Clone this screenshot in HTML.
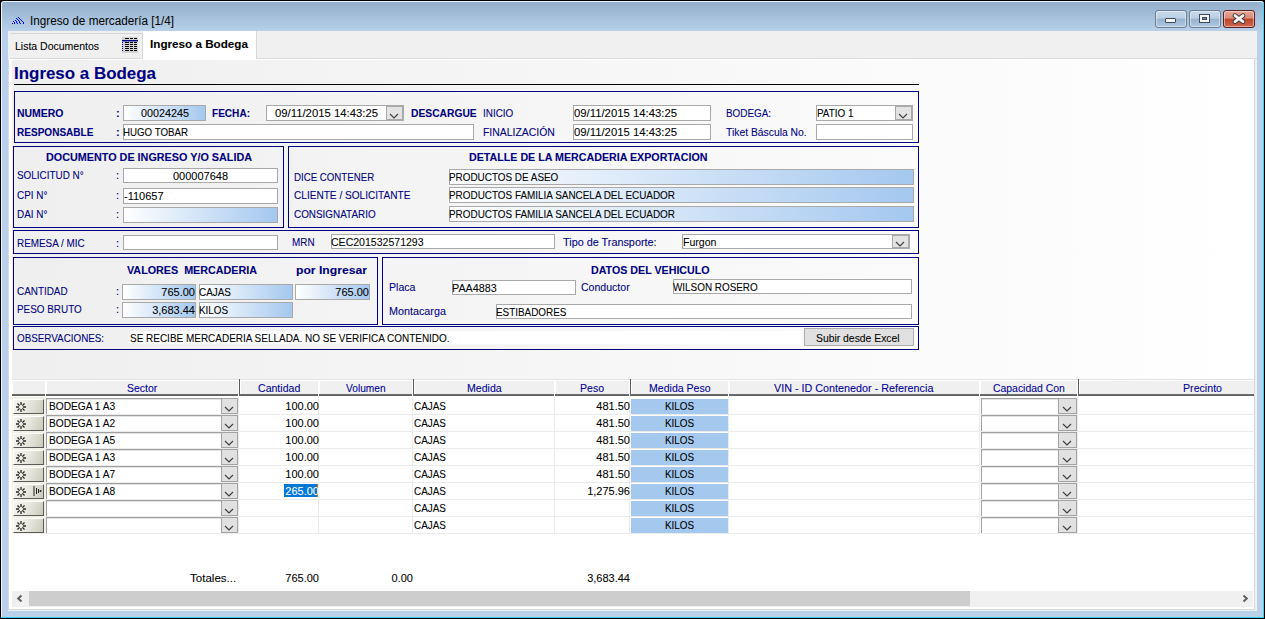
<!DOCTYPE html><html><head><meta charset="utf-8"><style>
html,body{margin:0;padding:0;}
body{width:1265px;height:619px;position:relative;overflow:hidden;background:#000;font-family:"Liberation Sans",sans-serif;font-size:11px;}
.t{position:absolute;white-space:pre;line-height:13px;font-size:11px;color:#000;transform-origin:0 0;-webkit-text-stroke:0.08px currentColor;}
</style></head><body>
<div style="position:absolute;left:0px;top:0px;width:1265px;height:619px;box-sizing:border-box;background:#000;"></div><div style="position:absolute;left:1px;top:1px;width:1263px;height:617px;box-sizing:border-box;background:#eef6fd;border-radius:3px 3px 0 0;"></div><div style="position:absolute;left:2px;top:2px;width:1261px;height:616px;box-sizing:border-box;background:linear-gradient(to bottom,#93afcc 0px,#b9d1ea 30px,#b9d1ea 100%);border-radius:2px 2px 0 0;"></div><div style="position:absolute;left:1263px;top:3px;width:1px;height:615px;box-sizing:border-box;background:#3ad0f0;"></div><div style="position:absolute;left:1px;top:617px;width:1263px;height:1px;box-sizing:border-box;background:#3ad0f0;"></div><svg style="position:absolute;left:11px;top:16px" width="14" height="9" viewBox="0 0 14 9" fill="#0000ff"><rect x="1" y="7" width="1" height="1"/><rect x="2" y="5" width="1" height="1"/><rect x="3" y="6" width="1" height="1"/><rect x="3" y="7" width="1" height="1"/><rect x="4" y="4" width="1" height="1"/><rect x="5" y="5" width="1" height="1"/><rect x="5" y="6" width="1" height="1"/><rect x="6" y="7" width="1" height="1"/><rect x="5" y="2" width="1" height="1"/><rect x="6" y="3" width="1" height="1"/><rect x="7" y="4" width="1" height="1"/><rect x="8" y="5" width="1" height="1"/><rect x="8" y="6" width="1" height="1"/><rect x="9" y="7" width="1" height="1"/><rect x="7" y="1" width="1" height="1"/><rect x="8" y="2" width="1" height="1"/><rect x="9" y="3" width="1" height="1"/><rect x="10" y="4" width="1" height="1"/><rect x="11" y="5" width="1" height="1"/><rect x="12" y="6" width="1" height="1"/><rect x="12" y="7" width="1" height="1"/></svg><div class="t" style="left:30.00px;top:14px;font-size:12px;line-height:14px;transform:scaleX(0.9768);-webkit-text-stroke:0;">Ingreso de mercadería [1/4]</div><div style="position:absolute;left:1155px;top:10px;width:32px;height:18px;box-sizing:border-box;background:linear-gradient(to bottom,#c9daec 0%,#bccfe6 45%,#98b2cf 50%,#b0c8e2 100%);border:1px solid #6b7d90;border-radius:3px;box-shadow:inset 0 0 0 1px rgba(255,255,255,0.45);"></div><div style="position:absolute;left:1189px;top:10px;width:32px;height:18px;box-sizing:border-box;background:linear-gradient(to bottom,#c9daec 0%,#bccfe6 45%,#98b2cf 50%,#b0c8e2 100%);border:1px solid #6b7d90;border-radius:3px;box-shadow:inset 0 0 0 1px rgba(255,255,255,0.45);"></div><div style="position:absolute;left:1223px;top:10px;width:32px;height:18px;box-sizing:border-box;background:linear-gradient(to bottom,#e8a598 0%,#dc8a78 45%,#c0452a 50%,#cf6650 100%);border:1px solid #5a1e1e;border-radius:3px;box-shadow:inset 0 0 0 1px rgba(255,255,255,0.45);"></div><div style="position:absolute;left:1165px;top:18px;width:11px;height:5px;box-sizing:border-box;background:#f4f4f4;border:1px solid #3c4a5a;border-radius:1px;"></div><div style="position:absolute;left:1199px;top:14px;width:11px;height:9px;box-sizing:border-box;border:1px solid #3c4a5a;background:transparent;box-shadow:inset 0 0 0 2px #f4f4f4;"></div><div style="position:absolute;left:1202px;top:17px;width:5px;height:3px;box-sizing:border-box;background:#6f8fb0;border:1px solid #3c4a5a;"></div><svg style="position:absolute;left:1232px;top:13px" width="14" height="11" viewBox="0 0 14 11"><path d="M3 2.6 L11 8.6 M11 2.6 L3 8.6" stroke="#3a3a3a" stroke-width="4.6" stroke-linecap="round"/><path d="M3 2.6 L11 8.6 M11 2.6 L3 8.6" stroke="#f2f2f2" stroke-width="2.8" stroke-linecap="round"/></svg><div style="position:absolute;left:8px;top:31px;width:1249px;height:580px;box-sizing:border-box;background:#f0f0f0;"></div><div style="position:absolute;left:10px;top:33px;width:133px;height:26px;box-sizing:border-box;background:#f0f0f0;border-top:1px solid #d6d6d6;border-right:1px solid #d9d9d9;border-bottom:1px solid #d9d9d9;"></div><div style="position:absolute;left:256px;top:31px;width:1001px;height:28px;box-sizing:border-box;background:#f0f0f0;border-left:1px solid #d9d9d9;border-bottom:1px solid #d9d9d9;"></div><div class="t" style="left:15.00px;top:40px;transform:scaleX(0.9540);">Lista Documentos</div><svg style="position:absolute;left:122px;top:37px" width="16" height="16" viewBox="0 0 16 16"><rect x="0" y="0" width="16" height="16" fill="#d2d2d2"/><rect x="3" y="1" width="4" height="1" fill="#000"/><rect x="8" y="1" width="3" height="1" fill="#000"/><rect x="12" y="1" width="3" height="1" fill="#000"/><rect x="3" y="5" width="4" height="1" fill="#000"/><rect x="8" y="5" width="3" height="1" fill="#000"/><rect x="12" y="5" width="3" height="1" fill="#000"/><rect x="3" y="7" width="4" height="1" fill="#000"/><rect x="8" y="7" width="3" height="1" fill="#000"/><rect x="12" y="7" width="3" height="1" fill="#000"/><rect x="3" y="9" width="4" height="1" fill="#000"/><rect x="8" y="9" width="3" height="1" fill="#000"/><rect x="12" y="9" width="3" height="1" fill="#000"/><rect x="3" y="11" width="4" height="1" fill="#000"/><rect x="8" y="11" width="3" height="1" fill="#000"/><rect x="12" y="11" width="3" height="1" fill="#000"/><rect x="3" y="13" width="4" height="1" fill="#000"/><rect x="8" y="13" width="3" height="1" fill="#000"/><rect x="12" y="13" width="3" height="1" fill="#000"/><rect x="0" y="3" width="16" height="1.4" fill="#000090"/><rect x="0" y="5" width="1" height="1" fill="#000090"/><rect x="0" y="7" width="1" height="1" fill="#000090"/><rect x="0" y="9" width="1" height="1" fill="#000090"/><rect x="0" y="11" width="1" height="1" fill="#000090"/><rect x="0" y="13" width="1" height="1" fill="#000090"/></svg><div style="position:absolute;left:143px;top:31px;width:113px;height:29px;box-sizing:border-box;background:#fff;"></div><div class="t" style="left:150.00px;top:38px;font-weight:bold;transform:scaleX(1.0618);">Ingreso a Bodega</div><div style="position:absolute;left:8px;top:59px;width:1247px;height:551px;box-sizing:border-box;background:#fff;border:1px solid #d9d9d9;border-top-color:#fff;"></div><div style="position:absolute;left:12px;top:60px;width:1242px;height:319px;box-sizing:border-box;background:linear-gradient(to right,#efefef 0%,#ffffff 100%);"></div><div class="t" style="left:14.00px;top:64px;font-size:17px;line-height:20px;font-weight:bold;color:#000080;transform:scaleX(0.9955);">Ingreso a Bodega</div><div style="position:absolute;left:14px;top:84px;width:905px;height:1px;box-sizing:border-box;background:#000;"></div><div style="position:absolute;left:14px;top:91px;width:905px;height:52px;box-sizing:border-box;border:1px solid #000080;"></div><div class="t" style="left:17.00px;top:107px;font-weight:bold;color:#000080;transform:scaleX(0.9511);">NUMERO</div><div class="t" style="left:116.00px;top:107px;font-weight:bold;color:#000080;">:</div><div style="position:absolute;left:123px;top:105px;width:83px;height:16px;box-sizing:border-box;border:1px solid #a9a9a9;background:linear-gradient(to right,#ffffff 0%,#a4c8ef 100%);"></div><div class="t" style="left:140.50px;top:107px;transform:scaleX(0.9805);">00024245</div><div class="t" style="left:212.00px;top:107px;font-weight:bold;color:#000080;transform:scaleX(0.9143);">FECHA:</div><div style="position:absolute;left:266px;top:105px;width:138px;height:16px;box-sizing:border-box;border:1px solid #a9a9a9;background:#fff;"></div><div style="position:absolute;left:386px;top:106px;width:17px;height:14px;box-sizing:border-box;background:#e3e3e3;border:1px solid #a9a9a9;"></div><svg style="position:absolute;left:389.0px;top:112.5px" width="10" height="6" viewBox="0 0 10 6"><path d="M1 1 L5 5 L9 1" fill="none" stroke="#444" stroke-width="1.2"/></svg><div class="t" style="left:275.00px;top:107px;transform:scaleX(1.0287);">09/11/2015 14:43:25</div><div class="t" style="left:411.00px;top:107px;font-weight:bold;color:#000080;transform:scaleX(0.9346);">DESCARGUE</div><div class="t" style="left:483.00px;top:107px;color:#000080;transform:scaleX(0.9000);">INICIO</div><div style="position:absolute;left:573px;top:105px;width:138px;height:16px;box-sizing:border-box;border:1px solid #a9a9a9;background:#fff;"></div><div class="t" style="left:574.00px;top:107px;transform:scaleX(1.0287);">09/11/2015 14:43:25</div><div class="t" style="left:726.00px;top:107px;color:#000080;transform:scaleX(0.9000);">BODEGA:</div><div style="position:absolute;left:816px;top:105px;width:97px;height:16px;box-sizing:border-box;border:1px solid #a9a9a9;background:#fff;"></div><div class="t" style="left:817.00px;top:107px;transform:scaleX(0.9000);">PATIO 1</div><div style="position:absolute;left:895px;top:106px;width:17px;height:14px;box-sizing:border-box;background:#e3e3e3;border:1px solid #a9a9a9;"></div><svg style="position:absolute;left:898.0px;top:112.5px" width="10" height="6" viewBox="0 0 10 6"><path d="M1 1 L5 5 L9 1" fill="none" stroke="#444" stroke-width="1.2"/></svg><div class="t" style="left:17.00px;top:126px;font-weight:bold;color:#000080;transform:scaleX(0.9122);">RESPONSABLE</div><div class="t" style="left:116.00px;top:126px;font-weight:bold;color:#000080;">:</div><div style="position:absolute;left:123px;top:124px;width:351px;height:16px;box-sizing:border-box;border:1px solid #a9a9a9;background:#fff;"></div><div class="t" style="left:123.00px;top:126px;transform:scaleX(0.8836);">HUGO TOBAR</div><div class="t" style="left:483.00px;top:126px;color:#000080;transform:scaleX(0.9473);">FINALIZACIÓN</div><div style="position:absolute;left:573px;top:124px;width:138px;height:16px;box-sizing:border-box;border:1px solid #a9a9a9;background:#fff;"></div><div class="t" style="left:574.00px;top:126px;transform:scaleX(1.0287);">09/11/2015 14:43:25</div><div class="t" style="left:726.00px;top:126px;color:#000080;transform:scaleX(0.9406);">Tiket Báscula No.</div><div style="position:absolute;left:816px;top:124px;width:97px;height:16px;box-sizing:border-box;border:1px solid #a9a9a9;background:#fff;"></div><div style="position:absolute;left:13px;top:146px;width:271px;height:82px;box-sizing:border-box;border:1px solid #000080;"></div><div class="t" style="left:45.50px;top:151px;font-weight:bold;color:#000080;transform:scaleX(0.9817);">DOCUMENTO DE INGRESO Y/O SALIDA</div><div class="t" style="left:17.00px;top:169px;color:#000080;transform:scaleX(0.9000);">SOLICITUD N°</div><div class="t" style="left:116.00px;top:169px;color:#000080;">:</div><div style="position:absolute;left:123px;top:168px;width:155px;height:15px;box-sizing:border-box;border:1px solid #a9a9a9;background:#fff;"></div><div class="t" style="left:172.97px;top:170px;">000007648</div><div class="t" style="left:17.00px;top:189px;color:#000080;transform:scaleX(0.9000);">CPI N°</div><div class="t" style="left:116.00px;top:189px;color:#000080;">:</div><div style="position:absolute;left:123px;top:188px;width:155px;height:16px;box-sizing:border-box;border:1px solid #a9a9a9;background:#fff;"></div><div class="t" style="left:124.00px;top:190px;">-110657</div><div class="t" style="left:17.00px;top:208px;color:#000080;transform:scaleX(0.9000);">DAI N°</div><div class="t" style="left:116.00px;top:208px;color:#000080;">:</div><div style="position:absolute;left:123px;top:207px;width:155px;height:16px;box-sizing:border-box;border:1px solid #a9a9a9;background:linear-gradient(to right,#ffffff 0%,#a4c8ef 100%);"></div><div style="position:absolute;left:288px;top:146px;width:631px;height:82px;box-sizing:border-box;border:1px solid #000080;"></div><div class="t" style="left:468.50px;top:151px;font-weight:bold;color:#000080;transform:scaleX(0.9708);">DETALLE DE LA MERCADERIA EXPORTACION</div><div class="t" style="left:294.00px;top:171px;color:#000080;transform:scaleX(0.8807);">DICE CONTENER</div><div style="position:absolute;left:449px;top:169px;width:465px;height:16px;box-sizing:border-box;border:1px solid #a9a9a9;background:linear-gradient(to right,#ffffff 0%,#a4c8ef 100%);"></div><div class="t" style="left:449.00px;top:171px;transform:scaleX(0.9000);">PRODUCTOS DE ASEO</div><div class="t" style="left:294.00px;top:189px;color:#000080;transform:scaleX(0.9170);">CLIENTE / SOLICITANTE</div><div style="position:absolute;left:449px;top:187px;width:465px;height:16px;box-sizing:border-box;border:1px solid #a9a9a9;background:linear-gradient(to right,#ffffff 0%,#a4c8ef 100%);"></div><div class="t" style="left:449.00px;top:189px;transform:scaleX(0.9017);">PRODUCTOS FAMILIA SANCELA DEL ECUADOR</div><div class="t" style="left:294.00px;top:208px;color:#000080;transform:scaleX(0.9000);">CONSIGNATARIO</div><div style="position:absolute;left:449px;top:206px;width:465px;height:16px;box-sizing:border-box;border:1px solid #a9a9a9;background:linear-gradient(to right,#ffffff 0%,#a4c8ef 100%);"></div><div class="t" style="left:449.00px;top:208px;transform:scaleX(0.9017);">PRODUCTOS FAMILIA SANCELA DEL ECUADOR</div><div style="position:absolute;left:13px;top:230px;width:906px;height:24px;box-sizing:border-box;border:1px solid #000080;"></div><div class="t" style="left:17.00px;top:237px;color:#000080;transform:scaleX(0.9000);">REMESA / MIC</div><div class="t" style="left:116.00px;top:237px;color:#000080;">:</div><div style="position:absolute;left:123px;top:235px;width:155px;height:15px;box-sizing:border-box;border:1px solid #a9a9a9;background:#fff;"></div><div class="t" style="left:292.00px;top:236px;color:#000080;transform:scaleX(0.9000);">MRN</div><div style="position:absolute;left:331px;top:234px;width:224px;height:15px;box-sizing:border-box;border:1px solid #a9a9a9;background:#fff;"></div><div class="t" style="left:331.00px;top:236px;transform:scaleX(0.9582);">CEC201532571293</div><div class="t" style="left:563.00px;top:236px;color:#000080;transform:scaleX(0.9854);">Tipo de Transporte:</div><div style="position:absolute;left:682px;top:234px;width:228px;height:15px;box-sizing:border-box;border:1px solid #a9a9a9;background:#fff;"></div><div class="t" style="left:683.00px;top:236px;transform:scaleX(0.9600);">Furgon</div><div style="position:absolute;left:892px;top:235px;width:17px;height:13px;box-sizing:border-box;background:#e3e3e3;border:1px solid #a9a9a9;"></div><svg style="position:absolute;left:895.0px;top:241.0px" width="10" height="6" viewBox="0 0 10 6"><path d="M1 1 L5 5 L9 1" fill="none" stroke="#444" stroke-width="1.2"/></svg><div style="position:absolute;left:13px;top:257px;width:365px;height:68px;box-sizing:border-box;border:1px solid #000080;"></div><div class="t" style="left:127.00px;top:264px;font-weight:bold;color:#000080;transform:scaleX(0.9772);">VALORES  MERCADERIA</div><div class="t" style="left:296.00px;top:264px;font-weight:bold;color:#000080;transform:scaleX(1.1061);">por Ingresar</div><div class="t" style="left:17.00px;top:285px;color:#000080;transform:scaleX(0.9000);">CANTIDAD</div><div class="t" style="left:116.00px;top:285px;color:#000080;">:</div><div style="position:absolute;left:122px;top:284px;width:74px;height:16px;box-sizing:border-box;border:1px solid #a9a9a9;background:linear-gradient(to right,#ffffff 0%,#a4c8ef 100%);"></div><div class="t" style="left:161.34px;top:286px;">765.00</div><div style="position:absolute;left:199px;top:284px;width:94px;height:16px;box-sizing:border-box;border:1px solid #a9a9a9;background:linear-gradient(to right,#ffffff 0%,#a4c8ef 100%);"></div><div class="t" style="left:199.00px;top:286px;transform:scaleX(0.9000);">CAJAS</div><div style="position:absolute;left:295px;top:284px;width:75px;height:16px;box-sizing:border-box;border:1px solid #a9a9a9;background:linear-gradient(to right,#ffffff 0%,#a4c8ef 100%);"></div><div class="t" style="left:335.34px;top:286px;">765.00</div><div class="t" style="left:17.00px;top:303px;color:#000080;transform:scaleX(0.9000);">PESO BRUTO</div><div class="t" style="left:116.00px;top:303px;color:#000080;">:</div><div style="position:absolute;left:122px;top:302px;width:74px;height:16px;box-sizing:border-box;border:1px solid #a9a9a9;background:linear-gradient(to right,#ffffff 0%,#a4c8ef 100%);"></div><div class="t" style="left:152.17px;top:304px;">3,683.44</div><div style="position:absolute;left:199px;top:302px;width:94px;height:16px;box-sizing:border-box;border:1px solid #a9a9a9;background:linear-gradient(to right,#ffffff 0%,#a4c8ef 100%);"></div><div class="t" style="left:199.00px;top:304px;transform:scaleX(0.9000);">KILOS</div><div style="position:absolute;left:382px;top:257px;width:537px;height:68px;box-sizing:border-box;border:1px solid #000080;"></div><div class="t" style="left:591.20px;top:264px;font-weight:bold;color:#000080;transform:scaleX(0.9701);">DATOS DEL VEHICULO</div><div class="t" style="left:389.00px;top:281px;color:#000080;transform:scaleX(0.9600);">Placa</div><div style="position:absolute;left:452px;top:280px;width:124px;height:15px;box-sizing:border-box;border:1px solid #a9a9a9;background:#fff;"></div><div class="t" style="left:452.00px;top:282px;transform:scaleX(0.9787);">PAA4883</div><div class="t" style="left:581.00px;top:281px;color:#000080;transform:scaleX(0.9593);">Conductor</div><div style="position:absolute;left:673px;top:279px;width:239px;height:15px;box-sizing:border-box;border:1px solid #a9a9a9;background:#fff;"></div><div class="t" style="left:673.00px;top:281px;transform:scaleX(0.9000);">WILSON ROSERO</div><div class="t" style="left:389.00px;top:305px;color:#000080;transform:scaleX(0.9795);">Montacarga</div><div style="position:absolute;left:496px;top:304px;width:416px;height:15px;box-sizing:border-box;border:1px solid #a9a9a9;background:#fff;"></div><div class="t" style="left:496.00px;top:306px;transform:scaleX(0.9000);">ESTIBADORES</div><div style="position:absolute;left:13px;top:326px;width:906px;height:24px;box-sizing:border-box;border:1px solid #000080;"></div><div class="t" style="left:17.00px;top:332px;color:#000080;transform:scaleX(0.8942);">OBSERVACIONES:</div><div style="position:absolute;left:130px;top:331px;width:671px;height:13px;box-sizing:border-box;background:#fff;"></div><div class="t" style="left:130.00px;top:332px;transform:scaleX(0.9061);">SE RECIBE MERCADERIA SELLADA. NO SE VERIFICA CONTENIDO.</div><div style="position:absolute;left:804px;top:328px;width:110px;height:18px;box-sizing:border-box;background:#e1e1e1;border:1px solid #adadad;"></div><div class="t" style="left:816.40px;top:332px;transform:scaleX(0.9428);">Subir desde Excel</div><div style="position:absolute;left:12px;top:379px;width:1242px;height:1px;box-sizing:border-box;background:#e3e3e3;"></div><div style="position:absolute;left:12px;top:380px;width:1242px;height:16px;box-sizing:border-box;background:#fff;"></div><div style="position:absolute;left:12px;top:380px;width:33px;height:14px;box-sizing:border-box;background:#f0f0f0;border-top:1px solid #fff;border-left:1px solid #fff;"></div><div style="position:absolute;left:12px;top:394px;width:33px;height:2px;box-sizing:border-box;background:linear-gradient(#707070,#5c5c5c);"></div><div style="position:absolute;left:46px;top:380px;width:192px;height:14px;box-sizing:border-box;background:#f0f0f0;border-top:1px solid #fff;border-left:1px solid #fff;"></div><div style="position:absolute;left:46px;top:394px;width:192px;height:2px;box-sizing:border-box;background:linear-gradient(#707070,#5c5c5c);"></div><div class="t" style="left:126.90px;top:382px;color:#000096;transform:scaleX(0.9498);">Sector</div><div style="position:absolute;left:239px;top:380px;width:79px;height:14px;box-sizing:border-box;background:#f0f0f0;border-top:1px solid #fff;border-left:1px solid #5a5a5a;"></div><div style="position:absolute;left:240px;top:381px;width:1px;height:13px;box-sizing:border-box;background:#fff;"></div><div style="position:absolute;left:239px;top:379px;width:1px;height:15px;box-sizing:border-box;background:#5a5a5a;"></div><div style="position:absolute;left:239px;top:394px;width:79px;height:2px;box-sizing:border-box;background:linear-gradient(#707070,#5c5c5c);"></div><div class="t" style="left:257.86px;top:382px;color:#000096;transform:scaleX(0.9600);">Cantidad</div><div style="position:absolute;left:319px;top:380px;width:93px;height:14px;box-sizing:border-box;background:#f0f0f0;border-top:1px solid #fff;border-left:1px solid #fff;"></div><div style="position:absolute;left:319px;top:394px;width:93px;height:2px;box-sizing:border-box;background:linear-gradient(#707070,#5c5c5c);"></div><div class="t" style="left:345.70px;top:382px;color:#000096;transform:scaleX(0.9250);">Volumen</div><div style="position:absolute;left:413px;top:380px;width:141px;height:14px;box-sizing:border-box;background:#f0f0f0;border-top:1px solid #fff;border-left:1px solid #5a5a5a;"></div><div style="position:absolute;left:414px;top:381px;width:1px;height:13px;box-sizing:border-box;background:#fff;"></div><div style="position:absolute;left:413px;top:379px;width:1px;height:15px;box-sizing:border-box;background:#5a5a5a;"></div><div style="position:absolute;left:413px;top:394px;width:141px;height:2px;box-sizing:border-box;background:linear-gradient(#707070,#5c5c5c);"></div><div class="t" style="left:466.68px;top:382px;color:#000096;transform:scaleX(0.9600);">Medida</div><div style="position:absolute;left:555px;top:380px;width:74px;height:14px;box-sizing:border-box;background:#f0f0f0;border-top:1px solid #fff;border-left:1px solid #fff;"></div><div style="position:absolute;left:555px;top:394px;width:74px;height:2px;box-sizing:border-box;background:linear-gradient(#707070,#5c5c5c);"></div><div class="t" style="left:579.96px;top:382px;color:#000096;transform:scaleX(0.9600);">Peso</div><div style="position:absolute;left:630px;top:380px;width:98px;height:14px;box-sizing:border-box;background:#f0f0f0;border-top:1px solid #fff;border-left:1px solid #5a5a5a;"></div><div style="position:absolute;left:631px;top:381px;width:1px;height:13px;box-sizing:border-box;background:#fff;"></div><div style="position:absolute;left:630px;top:379px;width:1px;height:15px;box-sizing:border-box;background:#5a5a5a;"></div><div style="position:absolute;left:630px;top:394px;width:98px;height:2px;box-sizing:border-box;background:linear-gradient(#707070,#5c5c5c);"></div><div class="t" style="left:648.67px;top:382px;color:#000096;transform:scaleX(0.9600);">Medida Peso</div><div style="position:absolute;left:729px;top:380px;width:250px;height:14px;box-sizing:border-box;background:#f0f0f0;border-top:1px solid #fff;border-left:1px solid #fff;"></div><div style="position:absolute;left:729px;top:394px;width:250px;height:2px;box-sizing:border-box;background:linear-gradient(#707070,#5c5c5c);"></div><div class="t" style="left:774.30px;top:382px;color:#000096;transform:scaleX(0.9801);">VIN - ID Contenedor - Referencia</div><div style="position:absolute;left:980px;top:380px;width:97px;height:14px;box-sizing:border-box;background:#f0f0f0;border-top:1px solid #fff;border-left:1px solid #fff;"></div><div style="position:absolute;left:980px;top:394px;width:97px;height:2px;box-sizing:border-box;background:linear-gradient(#707070,#5c5c5c);"></div><div class="t" style="left:992.60px;top:382px;color:#000096;transform:scaleX(0.9467);">Capacidad Con</div><div style="position:absolute;left:1078px;top:380px;width:176px;height:14px;box-sizing:border-box;background:#f0f0f0;border-top:1px solid #fff;border-left:1px solid #5a5a5a;"></div><div style="position:absolute;left:1079px;top:381px;width:1px;height:13px;box-sizing:border-box;background:#fff;"></div><div style="position:absolute;left:1078px;top:379px;width:1px;height:15px;box-sizing:border-box;background:#5a5a5a;"></div><div style="position:absolute;left:1078px;top:394px;width:176px;height:2px;box-sizing:border-box;background:linear-gradient(#707070,#5c5c5c);"></div><div class="t" style="left:1183.00px;top:382px;color:#000096;transform:scaleX(0.9663);">Precinto</div><div style="position:absolute;left:46px;top:414px;width:1208px;height:1px;box-sizing:border-box;background:#ebebeb;"></div><div style="position:absolute;left:12px;top:397px;width:34px;height:18px;box-sizing:border-box;background:#f1f1e6;"></div><div style="position:absolute;left:13px;top:399px;width:31px;height:15px;box-sizing:border-box;background:linear-gradient(110deg,#f4f4ec 0%,#e9e9df 45%,#dcdcd0 70%,#c9c9bc 100%);border-right:1px solid #5a5a5a;border-bottom:1px solid #5a5a5a;border-top:1px solid #fff;border-left:1px solid #fff;"></div><svg style="position:absolute;left:15.5px;top:401.5px" width="10" height="10" viewBox="0 0 10 10"><g stroke="#262626" stroke-width="1.3"><path d="M6.90 5.00 L10.00 5.00 M6.34 6.34 L8.54 8.54 M5.00 6.90 L5.00 10.00 M3.66 6.34 L1.46 8.54 M3.10 5.00 L0.00 5.00 M3.66 3.66 L1.46 1.46 M5.00 3.10 L5.00 0.00 M6.34 3.66 L8.54 1.46"/></g></svg><div style="position:absolute;left:238px;top:397px;width:1px;height:18px;box-sizing:border-box;background:#ebebeb;"></div><div style="position:absolute;left:318px;top:397px;width:1px;height:18px;box-sizing:border-box;background:#ebebeb;"></div><div style="position:absolute;left:412px;top:397px;width:1px;height:18px;box-sizing:border-box;background:#ebebeb;"></div><div style="position:absolute;left:554px;top:397px;width:1px;height:18px;box-sizing:border-box;background:#ebebeb;"></div><div style="position:absolute;left:629px;top:397px;width:1px;height:18px;box-sizing:border-box;background:#ebebeb;"></div><div style="position:absolute;left:728px;top:397px;width:1px;height:18px;box-sizing:border-box;background:#ebebeb;"></div><div style="position:absolute;left:979px;top:397px;width:1px;height:18px;box-sizing:border-box;background:#ebebeb;"></div><div style="position:absolute;left:1077px;top:397px;width:1px;height:18px;box-sizing:border-box;background:#ebebeb;"></div><div style="position:absolute;left:46px;top:398px;width:192px;height:16px;box-sizing:border-box;background:#fff;border-top:1px solid #a0a0a0;border-left:1px solid #a0a0a0;box-shadow:inset 0 1px 0 #e3e3e3;"></div><div style="position:absolute;left:221px;top:398px;width:17px;height:16px;box-sizing:border-box;background:#e1e1e1;border:1px solid #a3a3a3;"></div><svg style="position:absolute;left:224px;top:406px" width="10" height="6" viewBox="0 0 10 6"><path d="M1 1 L5 5 L9 1" fill="none" stroke="#404040" stroke-width="1.2"/></svg><div class="t" style="left:49.00px;top:400px;transform:scaleX(0.9253);">BODEGA 1 A3</div><div class="t" style="left:285.34px;top:400px;">100.00</div><div class="t" style="left:414.00px;top:400px;transform:scaleX(0.9000);">CAJAS</div><div class="t" style="left:596.34px;top:400px;">481.50</div><div style="position:absolute;left:631px;top:399px;width:97px;height:15px;box-sizing:border-box;background:#a4c8ee;"></div><div class="t" style="left:664.92px;top:400px;transform:scaleX(0.9000);">KILOS</div><div style="position:absolute;left:981px;top:398px;width:96px;height:16px;box-sizing:border-box;background:#fff;border-top:1px solid #a0a0a0;border-left:1px solid #a0a0a0;box-shadow:inset 0 1px 0 #e3e3e3;"></div><div style="position:absolute;left:1058px;top:398px;width:19px;height:16px;box-sizing:border-box;background:#e1e1e1;border:1px solid #a3a3a3;"></div><svg style="position:absolute;left:1062px;top:406px" width="10" height="6" viewBox="0 0 10 6"><path d="M1 1 L5 5 L9 1" fill="none" stroke="#404040" stroke-width="1.2"/></svg><div style="position:absolute;left:46px;top:431px;width:1208px;height:1px;box-sizing:border-box;background:#ebebeb;"></div><div style="position:absolute;left:12px;top:414px;width:34px;height:18px;box-sizing:border-box;background:#f1f1e6;"></div><div style="position:absolute;left:13px;top:416px;width:31px;height:15px;box-sizing:border-box;background:linear-gradient(110deg,#f4f4ec 0%,#e9e9df 45%,#dcdcd0 70%,#c9c9bc 100%);border-right:1px solid #5a5a5a;border-bottom:1px solid #5a5a5a;border-top:1px solid #fff;border-left:1px solid #fff;"></div><svg style="position:absolute;left:15.5px;top:418.5px" width="10" height="10" viewBox="0 0 10 10"><g stroke="#262626" stroke-width="1.3"><path d="M6.90 5.00 L10.00 5.00 M6.34 6.34 L8.54 8.54 M5.00 6.90 L5.00 10.00 M3.66 6.34 L1.46 8.54 M3.10 5.00 L0.00 5.00 M3.66 3.66 L1.46 1.46 M5.00 3.10 L5.00 0.00 M6.34 3.66 L8.54 1.46"/></g></svg><div style="position:absolute;left:238px;top:414px;width:1px;height:18px;box-sizing:border-box;background:#ebebeb;"></div><div style="position:absolute;left:318px;top:414px;width:1px;height:18px;box-sizing:border-box;background:#ebebeb;"></div><div style="position:absolute;left:412px;top:414px;width:1px;height:18px;box-sizing:border-box;background:#ebebeb;"></div><div style="position:absolute;left:554px;top:414px;width:1px;height:18px;box-sizing:border-box;background:#ebebeb;"></div><div style="position:absolute;left:629px;top:414px;width:1px;height:18px;box-sizing:border-box;background:#ebebeb;"></div><div style="position:absolute;left:728px;top:414px;width:1px;height:18px;box-sizing:border-box;background:#ebebeb;"></div><div style="position:absolute;left:979px;top:414px;width:1px;height:18px;box-sizing:border-box;background:#ebebeb;"></div><div style="position:absolute;left:1077px;top:414px;width:1px;height:18px;box-sizing:border-box;background:#ebebeb;"></div><div style="position:absolute;left:46px;top:415px;width:192px;height:16px;box-sizing:border-box;background:#fff;border-top:1px solid #a0a0a0;border-left:1px solid #a0a0a0;box-shadow:inset 0 1px 0 #e3e3e3;"></div><div style="position:absolute;left:221px;top:415px;width:17px;height:16px;box-sizing:border-box;background:#e1e1e1;border:1px solid #a3a3a3;"></div><svg style="position:absolute;left:224px;top:423px" width="10" height="6" viewBox="0 0 10 6"><path d="M1 1 L5 5 L9 1" fill="none" stroke="#404040" stroke-width="1.2"/></svg><div class="t" style="left:49.00px;top:417px;transform:scaleX(0.9253);">BODEGA 1 A2</div><div class="t" style="left:285.34px;top:417px;">100.00</div><div class="t" style="left:414.00px;top:417px;transform:scaleX(0.9000);">CAJAS</div><div class="t" style="left:596.34px;top:417px;">481.50</div><div style="position:absolute;left:631px;top:416px;width:97px;height:15px;box-sizing:border-box;background:#a4c8ee;"></div><div class="t" style="left:664.92px;top:417px;transform:scaleX(0.9000);">KILOS</div><div style="position:absolute;left:981px;top:415px;width:96px;height:16px;box-sizing:border-box;background:#fff;border-top:1px solid #a0a0a0;border-left:1px solid #a0a0a0;box-shadow:inset 0 1px 0 #e3e3e3;"></div><div style="position:absolute;left:1058px;top:415px;width:19px;height:16px;box-sizing:border-box;background:#e1e1e1;border:1px solid #a3a3a3;"></div><svg style="position:absolute;left:1062px;top:423px" width="10" height="6" viewBox="0 0 10 6"><path d="M1 1 L5 5 L9 1" fill="none" stroke="#404040" stroke-width="1.2"/></svg><div style="position:absolute;left:46px;top:448px;width:1208px;height:1px;box-sizing:border-box;background:#ebebeb;"></div><div style="position:absolute;left:12px;top:431px;width:34px;height:18px;box-sizing:border-box;background:#f1f1e6;"></div><div style="position:absolute;left:13px;top:433px;width:31px;height:15px;box-sizing:border-box;background:linear-gradient(110deg,#f4f4ec 0%,#e9e9df 45%,#dcdcd0 70%,#c9c9bc 100%);border-right:1px solid #5a5a5a;border-bottom:1px solid #5a5a5a;border-top:1px solid #fff;border-left:1px solid #fff;"></div><svg style="position:absolute;left:15.5px;top:435.5px" width="10" height="10" viewBox="0 0 10 10"><g stroke="#262626" stroke-width="1.3"><path d="M6.90 5.00 L10.00 5.00 M6.34 6.34 L8.54 8.54 M5.00 6.90 L5.00 10.00 M3.66 6.34 L1.46 8.54 M3.10 5.00 L0.00 5.00 M3.66 3.66 L1.46 1.46 M5.00 3.10 L5.00 0.00 M6.34 3.66 L8.54 1.46"/></g></svg><div style="position:absolute;left:238px;top:431px;width:1px;height:18px;box-sizing:border-box;background:#ebebeb;"></div><div style="position:absolute;left:318px;top:431px;width:1px;height:18px;box-sizing:border-box;background:#ebebeb;"></div><div style="position:absolute;left:412px;top:431px;width:1px;height:18px;box-sizing:border-box;background:#ebebeb;"></div><div style="position:absolute;left:554px;top:431px;width:1px;height:18px;box-sizing:border-box;background:#ebebeb;"></div><div style="position:absolute;left:629px;top:431px;width:1px;height:18px;box-sizing:border-box;background:#ebebeb;"></div><div style="position:absolute;left:728px;top:431px;width:1px;height:18px;box-sizing:border-box;background:#ebebeb;"></div><div style="position:absolute;left:979px;top:431px;width:1px;height:18px;box-sizing:border-box;background:#ebebeb;"></div><div style="position:absolute;left:1077px;top:431px;width:1px;height:18px;box-sizing:border-box;background:#ebebeb;"></div><div style="position:absolute;left:46px;top:432px;width:192px;height:16px;box-sizing:border-box;background:#fff;border-top:1px solid #a0a0a0;border-left:1px solid #a0a0a0;box-shadow:inset 0 1px 0 #e3e3e3;"></div><div style="position:absolute;left:221px;top:432px;width:17px;height:16px;box-sizing:border-box;background:#e1e1e1;border:1px solid #a3a3a3;"></div><svg style="position:absolute;left:224px;top:440px" width="10" height="6" viewBox="0 0 10 6"><path d="M1 1 L5 5 L9 1" fill="none" stroke="#404040" stroke-width="1.2"/></svg><div class="t" style="left:49.00px;top:434px;transform:scaleX(0.9253);">BODEGA 1 A5</div><div class="t" style="left:285.34px;top:434px;">100.00</div><div class="t" style="left:414.00px;top:434px;transform:scaleX(0.9000);">CAJAS</div><div class="t" style="left:596.34px;top:434px;">481.50</div><div style="position:absolute;left:631px;top:433px;width:97px;height:15px;box-sizing:border-box;background:#a4c8ee;"></div><div class="t" style="left:664.92px;top:434px;transform:scaleX(0.9000);">KILOS</div><div style="position:absolute;left:981px;top:432px;width:96px;height:16px;box-sizing:border-box;background:#fff;border-top:1px solid #a0a0a0;border-left:1px solid #a0a0a0;box-shadow:inset 0 1px 0 #e3e3e3;"></div><div style="position:absolute;left:1058px;top:432px;width:19px;height:16px;box-sizing:border-box;background:#e1e1e1;border:1px solid #a3a3a3;"></div><svg style="position:absolute;left:1062px;top:440px" width="10" height="6" viewBox="0 0 10 6"><path d="M1 1 L5 5 L9 1" fill="none" stroke="#404040" stroke-width="1.2"/></svg><div style="position:absolute;left:46px;top:465px;width:1208px;height:1px;box-sizing:border-box;background:#ebebeb;"></div><div style="position:absolute;left:12px;top:448px;width:34px;height:18px;box-sizing:border-box;background:#f1f1e6;"></div><div style="position:absolute;left:13px;top:450px;width:31px;height:15px;box-sizing:border-box;background:linear-gradient(110deg,#f4f4ec 0%,#e9e9df 45%,#dcdcd0 70%,#c9c9bc 100%);border-right:1px solid #5a5a5a;border-bottom:1px solid #5a5a5a;border-top:1px solid #fff;border-left:1px solid #fff;"></div><svg style="position:absolute;left:15.5px;top:452.5px" width="10" height="10" viewBox="0 0 10 10"><g stroke="#262626" stroke-width="1.3"><path d="M6.90 5.00 L10.00 5.00 M6.34 6.34 L8.54 8.54 M5.00 6.90 L5.00 10.00 M3.66 6.34 L1.46 8.54 M3.10 5.00 L0.00 5.00 M3.66 3.66 L1.46 1.46 M5.00 3.10 L5.00 0.00 M6.34 3.66 L8.54 1.46"/></g></svg><div style="position:absolute;left:238px;top:448px;width:1px;height:18px;box-sizing:border-box;background:#ebebeb;"></div><div style="position:absolute;left:318px;top:448px;width:1px;height:18px;box-sizing:border-box;background:#ebebeb;"></div><div style="position:absolute;left:412px;top:448px;width:1px;height:18px;box-sizing:border-box;background:#ebebeb;"></div><div style="position:absolute;left:554px;top:448px;width:1px;height:18px;box-sizing:border-box;background:#ebebeb;"></div><div style="position:absolute;left:629px;top:448px;width:1px;height:18px;box-sizing:border-box;background:#ebebeb;"></div><div style="position:absolute;left:728px;top:448px;width:1px;height:18px;box-sizing:border-box;background:#ebebeb;"></div><div style="position:absolute;left:979px;top:448px;width:1px;height:18px;box-sizing:border-box;background:#ebebeb;"></div><div style="position:absolute;left:1077px;top:448px;width:1px;height:18px;box-sizing:border-box;background:#ebebeb;"></div><div style="position:absolute;left:46px;top:449px;width:192px;height:16px;box-sizing:border-box;background:#fff;border-top:1px solid #a0a0a0;border-left:1px solid #a0a0a0;box-shadow:inset 0 1px 0 #e3e3e3;"></div><div style="position:absolute;left:221px;top:449px;width:17px;height:16px;box-sizing:border-box;background:#e1e1e1;border:1px solid #a3a3a3;"></div><svg style="position:absolute;left:224px;top:457px" width="10" height="6" viewBox="0 0 10 6"><path d="M1 1 L5 5 L9 1" fill="none" stroke="#404040" stroke-width="1.2"/></svg><div class="t" style="left:49.00px;top:451px;transform:scaleX(0.9253);">BODEGA 1 A3</div><div class="t" style="left:285.34px;top:451px;">100.00</div><div class="t" style="left:414.00px;top:451px;transform:scaleX(0.9000);">CAJAS</div><div class="t" style="left:596.34px;top:451px;">481.50</div><div style="position:absolute;left:631px;top:450px;width:97px;height:15px;box-sizing:border-box;background:#a4c8ee;"></div><div class="t" style="left:664.92px;top:451px;transform:scaleX(0.9000);">KILOS</div><div style="position:absolute;left:981px;top:449px;width:96px;height:16px;box-sizing:border-box;background:#fff;border-top:1px solid #a0a0a0;border-left:1px solid #a0a0a0;box-shadow:inset 0 1px 0 #e3e3e3;"></div><div style="position:absolute;left:1058px;top:449px;width:19px;height:16px;box-sizing:border-box;background:#e1e1e1;border:1px solid #a3a3a3;"></div><svg style="position:absolute;left:1062px;top:457px" width="10" height="6" viewBox="0 0 10 6"><path d="M1 1 L5 5 L9 1" fill="none" stroke="#404040" stroke-width="1.2"/></svg><div style="position:absolute;left:46px;top:482px;width:1208px;height:1px;box-sizing:border-box;background:#ebebeb;"></div><div style="position:absolute;left:12px;top:465px;width:34px;height:18px;box-sizing:border-box;background:#f1f1e6;"></div><div style="position:absolute;left:13px;top:467px;width:31px;height:15px;box-sizing:border-box;background:linear-gradient(110deg,#f4f4ec 0%,#e9e9df 45%,#dcdcd0 70%,#c9c9bc 100%);border-right:1px solid #5a5a5a;border-bottom:1px solid #5a5a5a;border-top:1px solid #fff;border-left:1px solid #fff;"></div><svg style="position:absolute;left:15.5px;top:469.5px" width="10" height="10" viewBox="0 0 10 10"><g stroke="#262626" stroke-width="1.3"><path d="M6.90 5.00 L10.00 5.00 M6.34 6.34 L8.54 8.54 M5.00 6.90 L5.00 10.00 M3.66 6.34 L1.46 8.54 M3.10 5.00 L0.00 5.00 M3.66 3.66 L1.46 1.46 M5.00 3.10 L5.00 0.00 M6.34 3.66 L8.54 1.46"/></g></svg><div style="position:absolute;left:238px;top:465px;width:1px;height:18px;box-sizing:border-box;background:#ebebeb;"></div><div style="position:absolute;left:318px;top:465px;width:1px;height:18px;box-sizing:border-box;background:#ebebeb;"></div><div style="position:absolute;left:412px;top:465px;width:1px;height:18px;box-sizing:border-box;background:#ebebeb;"></div><div style="position:absolute;left:554px;top:465px;width:1px;height:18px;box-sizing:border-box;background:#ebebeb;"></div><div style="position:absolute;left:629px;top:465px;width:1px;height:18px;box-sizing:border-box;background:#ebebeb;"></div><div style="position:absolute;left:728px;top:465px;width:1px;height:18px;box-sizing:border-box;background:#ebebeb;"></div><div style="position:absolute;left:979px;top:465px;width:1px;height:18px;box-sizing:border-box;background:#ebebeb;"></div><div style="position:absolute;left:1077px;top:465px;width:1px;height:18px;box-sizing:border-box;background:#ebebeb;"></div><div style="position:absolute;left:46px;top:466px;width:192px;height:16px;box-sizing:border-box;background:#fff;border-top:1px solid #a0a0a0;border-left:1px solid #a0a0a0;box-shadow:inset 0 1px 0 #e3e3e3;"></div><div style="position:absolute;left:221px;top:466px;width:17px;height:16px;box-sizing:border-box;background:#e1e1e1;border:1px solid #a3a3a3;"></div><svg style="position:absolute;left:224px;top:474px" width="10" height="6" viewBox="0 0 10 6"><path d="M1 1 L5 5 L9 1" fill="none" stroke="#404040" stroke-width="1.2"/></svg><div class="t" style="left:49.00px;top:468px;transform:scaleX(0.9253);">BODEGA 1 A7</div><div class="t" style="left:285.34px;top:468px;">100.00</div><div class="t" style="left:414.00px;top:468px;transform:scaleX(0.9000);">CAJAS</div><div class="t" style="left:596.34px;top:468px;">481.50</div><div style="position:absolute;left:631px;top:467px;width:97px;height:15px;box-sizing:border-box;background:#a4c8ee;"></div><div class="t" style="left:664.92px;top:468px;transform:scaleX(0.9000);">KILOS</div><div style="position:absolute;left:981px;top:466px;width:96px;height:16px;box-sizing:border-box;background:#fff;border-top:1px solid #a0a0a0;border-left:1px solid #a0a0a0;box-shadow:inset 0 1px 0 #e3e3e3;"></div><div style="position:absolute;left:1058px;top:466px;width:19px;height:16px;box-sizing:border-box;background:#e1e1e1;border:1px solid #a3a3a3;"></div><svg style="position:absolute;left:1062px;top:474px" width="10" height="6" viewBox="0 0 10 6"><path d="M1 1 L5 5 L9 1" fill="none" stroke="#404040" stroke-width="1.2"/></svg><div style="position:absolute;left:46px;top:499px;width:1208px;height:1px;box-sizing:border-box;background:#ebebeb;"></div><div style="position:absolute;left:12px;top:482px;width:34px;height:18px;box-sizing:border-box;background:#f1f1e6;"></div><div style="position:absolute;left:13px;top:484px;width:31px;height:15px;box-sizing:border-box;background:linear-gradient(110deg,#f4f4ec 0%,#e9e9df 45%,#dcdcd0 70%,#c9c9bc 100%);border-right:1px solid #5a5a5a;border-bottom:1px solid #5a5a5a;border-top:1px solid #fff;border-left:1px solid #fff;"></div><svg style="position:absolute;left:15.5px;top:486.5px" width="10" height="10" viewBox="0 0 10 10"><g stroke="#262626" stroke-width="1.3"><path d="M6.90 5.00 L10.00 5.00 M6.34 6.34 L8.54 8.54 M5.00 6.90 L5.00 10.00 M3.66 6.34 L1.46 8.54 M3.10 5.00 L0.00 5.00 M3.66 3.66 L1.46 1.46 M5.00 3.10 L5.00 0.00 M6.34 3.66 L8.54 1.46"/></g></svg><svg style="position:absolute;left:33px;top:486px" width="9" height="10" viewBox="0 0 9 10"><path d="M1 0 V10 M3.5 2 V8 M5.5 3 V7" stroke="#222" stroke-width="1"/><circle cx="7.5" cy="5" r="1" fill="#222"/></svg><div style="position:absolute;left:238px;top:482px;width:1px;height:18px;box-sizing:border-box;background:#ebebeb;"></div><div style="position:absolute;left:318px;top:482px;width:1px;height:18px;box-sizing:border-box;background:#ebebeb;"></div><div style="position:absolute;left:412px;top:482px;width:1px;height:18px;box-sizing:border-box;background:#ebebeb;"></div><div style="position:absolute;left:554px;top:482px;width:1px;height:18px;box-sizing:border-box;background:#ebebeb;"></div><div style="position:absolute;left:629px;top:482px;width:1px;height:18px;box-sizing:border-box;background:#ebebeb;"></div><div style="position:absolute;left:728px;top:482px;width:1px;height:18px;box-sizing:border-box;background:#ebebeb;"></div><div style="position:absolute;left:979px;top:482px;width:1px;height:18px;box-sizing:border-box;background:#ebebeb;"></div><div style="position:absolute;left:1077px;top:482px;width:1px;height:18px;box-sizing:border-box;background:#ebebeb;"></div><div style="position:absolute;left:46px;top:483px;width:192px;height:16px;box-sizing:border-box;background:#fff;border-top:1px solid #a0a0a0;border-left:1px solid #a0a0a0;box-shadow:inset 0 1px 0 #e3e3e3;"></div><div style="position:absolute;left:221px;top:483px;width:17px;height:16px;box-sizing:border-box;background:#e1e1e1;border:1px solid #a3a3a3;"></div><svg style="position:absolute;left:224px;top:491px" width="10" height="6" viewBox="0 0 10 6"><path d="M1 1 L5 5 L9 1" fill="none" stroke="#404040" stroke-width="1.2"/></svg><div class="t" style="left:49.00px;top:485px;transform:scaleX(0.9253);">BODEGA 1 A8</div><div style="position:absolute;left:284px;top:484px;width:34px;height:13px;box-sizing:border-box;background:#0078d7;"></div><div style="position:absolute;left:317px;top:484px;width:1px;height:13px;box-sizing:border-box;background:#e07000;"></div><div class="t" style="left:285.34px;top:485px;color:#fff;">265.00</div><div class="t" style="left:414.00px;top:485px;transform:scaleX(0.9000);">CAJAS</div><div class="t" style="left:587.17px;top:485px;">1,275.96</div><div style="position:absolute;left:631px;top:484px;width:97px;height:15px;box-sizing:border-box;background:#a4c8ee;"></div><div class="t" style="left:664.92px;top:485px;transform:scaleX(0.9000);">KILOS</div><div style="position:absolute;left:981px;top:483px;width:96px;height:16px;box-sizing:border-box;background:#fff;border-top:1px solid #a0a0a0;border-left:1px solid #a0a0a0;box-shadow:inset 0 1px 0 #e3e3e3;"></div><div style="position:absolute;left:1058px;top:483px;width:19px;height:16px;box-sizing:border-box;background:#e1e1e1;border:1px solid #a3a3a3;"></div><svg style="position:absolute;left:1062px;top:491px" width="10" height="6" viewBox="0 0 10 6"><path d="M1 1 L5 5 L9 1" fill="none" stroke="#404040" stroke-width="1.2"/></svg><div style="position:absolute;left:46px;top:516px;width:1208px;height:1px;box-sizing:border-box;background:#ebebeb;"></div><div style="position:absolute;left:12px;top:499px;width:34px;height:18px;box-sizing:border-box;background:#f1f1e6;"></div><div style="position:absolute;left:13px;top:501px;width:31px;height:15px;box-sizing:border-box;background:linear-gradient(110deg,#f4f4ec 0%,#e9e9df 45%,#dcdcd0 70%,#c9c9bc 100%);border-right:1px solid #5a5a5a;border-bottom:1px solid #5a5a5a;border-top:1px solid #fff;border-left:1px solid #fff;"></div><svg style="position:absolute;left:15.5px;top:503.5px" width="10" height="10" viewBox="0 0 10 10"><g stroke="#262626" stroke-width="1.3"><path d="M6.90 5.00 L10.00 5.00 M6.34 6.34 L8.54 8.54 M5.00 6.90 L5.00 10.00 M3.66 6.34 L1.46 8.54 M3.10 5.00 L0.00 5.00 M3.66 3.66 L1.46 1.46 M5.00 3.10 L5.00 0.00 M6.34 3.66 L8.54 1.46"/></g></svg><div style="position:absolute;left:238px;top:499px;width:1px;height:18px;box-sizing:border-box;background:#ebebeb;"></div><div style="position:absolute;left:318px;top:499px;width:1px;height:18px;box-sizing:border-box;background:#ebebeb;"></div><div style="position:absolute;left:412px;top:499px;width:1px;height:18px;box-sizing:border-box;background:#ebebeb;"></div><div style="position:absolute;left:554px;top:499px;width:1px;height:18px;box-sizing:border-box;background:#ebebeb;"></div><div style="position:absolute;left:629px;top:499px;width:1px;height:18px;box-sizing:border-box;background:#ebebeb;"></div><div style="position:absolute;left:728px;top:499px;width:1px;height:18px;box-sizing:border-box;background:#ebebeb;"></div><div style="position:absolute;left:979px;top:499px;width:1px;height:18px;box-sizing:border-box;background:#ebebeb;"></div><div style="position:absolute;left:1077px;top:499px;width:1px;height:18px;box-sizing:border-box;background:#ebebeb;"></div><div style="position:absolute;left:46px;top:500px;width:192px;height:16px;box-sizing:border-box;background:#fff;border-top:1px solid #a0a0a0;border-left:1px solid #a0a0a0;box-shadow:inset 0 1px 0 #e3e3e3;"></div><div style="position:absolute;left:221px;top:500px;width:17px;height:16px;box-sizing:border-box;background:#e1e1e1;border:1px solid #a3a3a3;"></div><svg style="position:absolute;left:224px;top:508px" width="10" height="6" viewBox="0 0 10 6"><path d="M1 1 L5 5 L9 1" fill="none" stroke="#404040" stroke-width="1.2"/></svg><div class="t" style="left:414.00px;top:502px;transform:scaleX(0.9000);">CAJAS</div><div style="position:absolute;left:631px;top:501px;width:97px;height:15px;box-sizing:border-box;background:#a4c8ee;"></div><div class="t" style="left:664.92px;top:502px;transform:scaleX(0.9000);">KILOS</div><div style="position:absolute;left:981px;top:500px;width:96px;height:16px;box-sizing:border-box;background:#fff;border-top:1px solid #a0a0a0;border-left:1px solid #a0a0a0;box-shadow:inset 0 1px 0 #e3e3e3;"></div><div style="position:absolute;left:1058px;top:500px;width:19px;height:16px;box-sizing:border-box;background:#e1e1e1;border:1px solid #a3a3a3;"></div><svg style="position:absolute;left:1062px;top:508px" width="10" height="6" viewBox="0 0 10 6"><path d="M1 1 L5 5 L9 1" fill="none" stroke="#404040" stroke-width="1.2"/></svg><div style="position:absolute;left:46px;top:533px;width:1208px;height:1px;box-sizing:border-box;background:#ebebeb;"></div><div style="position:absolute;left:12px;top:516px;width:34px;height:18px;box-sizing:border-box;background:#f1f1e6;"></div><div style="position:absolute;left:13px;top:518px;width:31px;height:15px;box-sizing:border-box;background:linear-gradient(110deg,#f4f4ec 0%,#e9e9df 45%,#dcdcd0 70%,#c9c9bc 100%);border-right:1px solid #5a5a5a;border-bottom:1px solid #5a5a5a;border-top:1px solid #fff;border-left:1px solid #fff;"></div><svg style="position:absolute;left:15.5px;top:520.5px" width="10" height="10" viewBox="0 0 10 10"><g stroke="#262626" stroke-width="1.3"><path d="M6.90 5.00 L10.00 5.00 M6.34 6.34 L8.54 8.54 M5.00 6.90 L5.00 10.00 M3.66 6.34 L1.46 8.54 M3.10 5.00 L0.00 5.00 M3.66 3.66 L1.46 1.46 M5.00 3.10 L5.00 0.00 M6.34 3.66 L8.54 1.46"/></g></svg><div style="position:absolute;left:238px;top:516px;width:1px;height:18px;box-sizing:border-box;background:#ebebeb;"></div><div style="position:absolute;left:318px;top:516px;width:1px;height:18px;box-sizing:border-box;background:#ebebeb;"></div><div style="position:absolute;left:412px;top:516px;width:1px;height:18px;box-sizing:border-box;background:#ebebeb;"></div><div style="position:absolute;left:554px;top:516px;width:1px;height:18px;box-sizing:border-box;background:#ebebeb;"></div><div style="position:absolute;left:629px;top:516px;width:1px;height:18px;box-sizing:border-box;background:#ebebeb;"></div><div style="position:absolute;left:728px;top:516px;width:1px;height:18px;box-sizing:border-box;background:#ebebeb;"></div><div style="position:absolute;left:979px;top:516px;width:1px;height:18px;box-sizing:border-box;background:#ebebeb;"></div><div style="position:absolute;left:1077px;top:516px;width:1px;height:18px;box-sizing:border-box;background:#ebebeb;"></div><div style="position:absolute;left:46px;top:517px;width:192px;height:16px;box-sizing:border-box;background:#fff;border-top:1px solid #a0a0a0;border-left:1px solid #a0a0a0;box-shadow:inset 0 1px 0 #e3e3e3;"></div><div style="position:absolute;left:221px;top:517px;width:17px;height:16px;box-sizing:border-box;background:#e1e1e1;border:1px solid #a3a3a3;"></div><svg style="position:absolute;left:224px;top:525px" width="10" height="6" viewBox="0 0 10 6"><path d="M1 1 L5 5 L9 1" fill="none" stroke="#404040" stroke-width="1.2"/></svg><div class="t" style="left:414.00px;top:519px;transform:scaleX(0.9000);">CAJAS</div><div style="position:absolute;left:631px;top:518px;width:97px;height:15px;box-sizing:border-box;background:#a4c8ee;"></div><div class="t" style="left:664.92px;top:519px;transform:scaleX(0.9000);">KILOS</div><div style="position:absolute;left:981px;top:517px;width:96px;height:16px;box-sizing:border-box;background:#fff;border-top:1px solid #a0a0a0;border-left:1px solid #a0a0a0;box-shadow:inset 0 1px 0 #e3e3e3;"></div><div style="position:absolute;left:1058px;top:517px;width:19px;height:16px;box-sizing:border-box;background:#e1e1e1;border:1px solid #a3a3a3;"></div><svg style="position:absolute;left:1062px;top:525px" width="10" height="6" viewBox="0 0 10 6"><path d="M1 1 L5 5 L9 1" fill="none" stroke="#404040" stroke-width="1.2"/></svg><div class="t" style="left:190.00px;top:572px;transform:scaleX(1.0493);">Totales...</div><div class="t" style="left:285.34px;top:572px;">765.00</div><div class="t" style="left:391.58px;top:572px;">0.00</div><div class="t" style="left:587.17px;top:572px;">3,683.44</div><div style="position:absolute;left:12px;top:591px;width:1241px;height:16px;box-sizing:border-box;background:#f0f0f0;"></div><div style="position:absolute;left:29px;top:591px;width:941px;height:15px;box-sizing:border-box;background:#cdcdcd;"></div><svg style="position:absolute;left:16px;top:594px" width="8" height="9" viewBox="0 0 8 9"><path d="M5.5 1.5 L2.2 4.5 L5.5 7.5" fill="none" stroke="#606060" stroke-width="2"/></svg><svg style="position:absolute;left:1241px;top:594px" width="8" height="9" viewBox="0 0 8 9"><path d="M2.5 1.5 L5.8 4.5 L2.5 7.5" fill="none" stroke="#606060" stroke-width="2"/></svg></body></html>
